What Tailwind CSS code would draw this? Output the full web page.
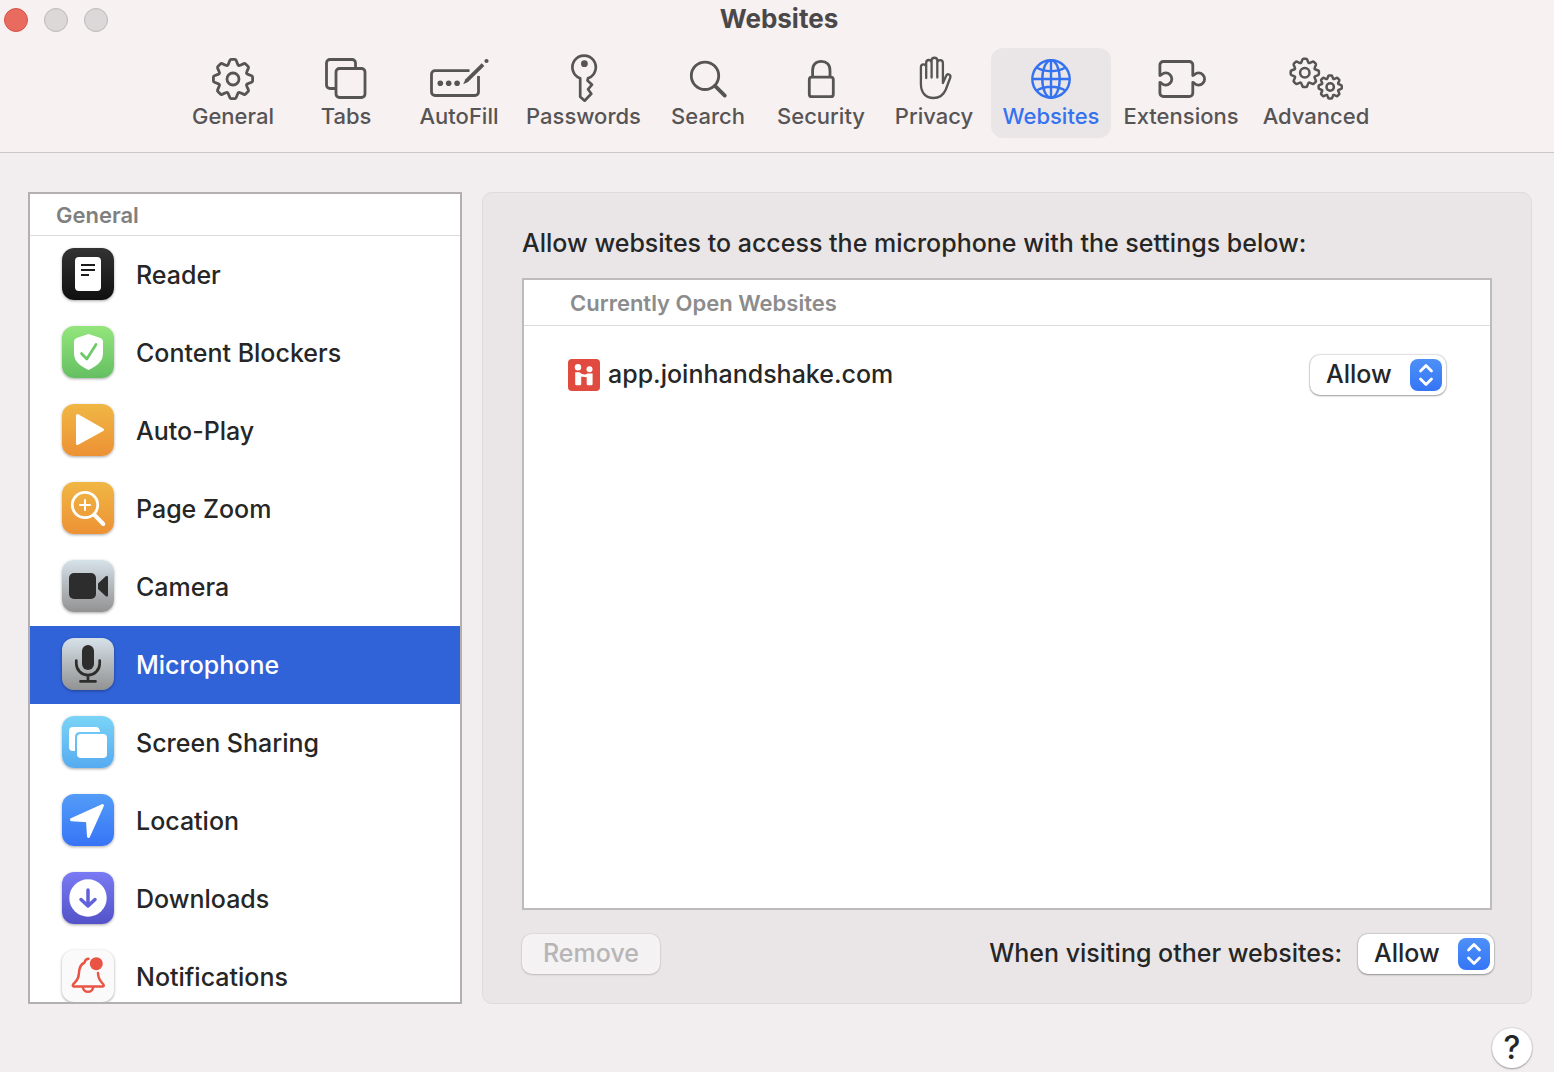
<!DOCTYPE html>
<html lang="en">
<head>
    <meta charset="UTF-8">
    <meta name="viewport" content="width=device-width, initial-scale=1.0">
    <title>Websites</title>
    <script src="https://cdn.jsdelivr.net/npm/@tailwindcss/browser@4"></script>
</head>
<body class="flex h-screen flex-col overflow-hidden bg-[#f2eeef] font-['Inter','Liberation_Sans',sans-serif] text-[25px] font-[450] text-[#262626]">

<!-- Shared gear outline -->
<svg class="hidden">
    <defs>
        <path id="gear" vector-effect="non-scaling-stroke" d="M-4.6-15L-3.2-18.6Q-2.8-19.6-1.8-19.6H1.8Q2.8-19.6 3.2-18.6L4.6-15Q5.28-12.75 7.35-13.86L10.9-15.4Q11.9-15.8 12.6-15.1L15.1-12.6Q15.8-11.9 15.4-10.9L13.86-7.35Q12.75-5.28 15-4.6L18.6-3.2Q19.6-2.8 19.6-1.8V1.8Q19.6 2.8 18.6 3.2L15 4.6Q12.75 5.28 13.86 7.35L15.4 10.9Q15.8 11.9 15.1 12.6L12.6 15.1Q11.9 15.8 10.9 15.4L7.35 13.86Q5.28 12.75 4.6 15L3.2 18.6Q2.8 19.6 1.8 19.6H-1.8Q-2.8 19.6-3.2 18.6L-4.6 15Q-5.28 12.75-7.35 13.86L-10.9 15.4Q-11.9 15.8-12.6 15.1L-15.1 12.6Q-15.8 11.9-15.4 10.9L-13.86 7.35Q-12.75 5.28-15 4.6L-18.6 3.2Q-19.6 2.8-19.6 1.8V-1.8Q-19.6-2.8-18.6-3.2L-15-4.6Q-12.75-5.28-13.86-7.35L-15.4-10.9Q-15.8-11.9-15.1-12.6L-12.6-15.1Q-11.9-15.8-10.9-15.4L-7.35-13.86Q-5.28-12.75-4.6-15Z"/>
    </defs>
</svg>

<!-- Title bar and toolbar -->
<header class="shrink-0 border-b border-[#cbc7c9] bg-[#f7f1f2] pb-[14px] pl-1 text-[#565455]">
    <div class="grid h-10 grid-cols-[1fr_auto_1fr] items-center">
        <div class="flex gap-4">
            <button type="button" aria-label="Close" class="size-6 rounded-full border border-[#d5554b] bg-[#e96b5f]"></button>
            <button type="button" aria-label="Minimize" disabled class="size-6 rounded-full border border-[#bcb8b8] bg-[#dcd8d8]"></button>
            <button type="button" aria-label="Zoom" disabled class="size-6 rounded-full border border-[#bcb8b8] bg-[#dcd8d9]"></button>
        </div>
        <h1 class="pb-0.5 text-[26px] leading-9 font-bold text-[#4a4849]">Websites</h1>
    </div>
    <nav aria-label="Settings" class="mt-2 flex justify-center gap-px text-[22px] leading-6">
        <button type="button" class="flex h-[90px] w-28 flex-col items-center pt-[6px]">
            <svg class="h-[50px] w-[60px]" viewBox="0 0 60 50" fill="none" stroke="currentColor" stroke-width="2.8">
                <use href="#gear" transform="translate(30 25)"/>
                <circle cx="30" cy="25" r="6"/>
            </svg>
            General
        </button>
        <button type="button" class="flex h-[90px] w-28 flex-col items-center pt-[6px]">
            <svg class="h-[50px] w-[60px]" viewBox="0 0 60 50" fill="none" stroke="currentColor" stroke-width="2.8">
                <rect x="20" y="14.5" width="29" height="29" rx="3.5"/>
                <path d="M20 34.5H14a3.5 3.5 0 0 1-3.5-3.5V9A3.5 3.5 0 0 1 14 5.5H36A3.5 3.5 0 0 1 39.5 9v5.5"/>
            </svg>
            Tabs
        </button>
        <button type="button" class="flex h-[90px] w-28 flex-col items-center pt-[6px]">
            <svg class="h-[50px] w-[60px]" viewBox="0 0 60 50" fill="none" stroke="currentColor" stroke-width="2.8">
                <path d="M40.5 16.7H6A3.5 3.5 0 0 0 2.500 20.2V38A3.5 3.5 0 0 0 6 41.5H46A3.5 3.5 0 0 0 49.5 38V22"/>
                <g fill="currentColor" stroke="none">
                    <circle cx="11.3" cy="29.3" r="2.8"/>
                    <circle cx="19.7" cy="29.3" r="2.8"/>
                    <circle cx="28.1" cy="29.3" r="2.8"/>
                    <path d="M34.2 30.2L36.4 25.3L52.7 9.3L55.3 11.9L39 27.9Z"/>
                    <circle cx="57.5" cy="7" r="2.1"/>
                </g>
            </svg>
            AutoFill
        </button>
        <button type="button" class="flex h-[90px] w-[135px] flex-col items-center pt-[6px]">
            <svg class="h-[50px] w-[60px]" viewBox="0 0 60 50" fill="none" stroke="currentColor" stroke-width="2.7" stroke-linejoin="round">
                <path d="M26.2 24.3A11.7 11.7 0 1 1 34 24.3L33.5 26.5L38 30.7L34 35.3L37.3 39.7L30.6 46.7L26.2 42.8Z"/>
                <circle cx="30.4" cy="9.7" r="3.4" fill="currentColor" stroke="none"/>
            </svg>
            Passwords
        </button>
        <button type="button" class="flex h-[90px] w-28 flex-col items-center pt-[6px]">
            <svg class="h-[50px] w-[60px]" viewBox="0 0 60 50" fill="none" stroke="currentColor" stroke-width="2.8">
                <circle cx="27" cy="21.8" r="13.7"/>
                <path d="M37 31.8L46.8 41.6" stroke-width="3.8" stroke-linecap="round"/>
            </svg>
            Search
        </button>
        <button type="button" class="flex h-[90px] w-28 flex-col items-center pt-[6px]">
            <svg class="h-[50px] w-[60px]" viewBox="0 0 60 50" fill="none" stroke="currentColor" stroke-width="2.8">
                <rect x="18.3" y="23.2" width="24" height="19.5" rx="2.5"/>
                <path d="M21.6 23V16.5C21.6 10.5 25 7.3 30.3 7.3S39 10.5 39 16.5V23"/>
            </svg>
            Security
        </button>
        <button type="button" class="flex h-[90px] w-28 flex-col items-center pt-[6px]">
            <svg class="h-[50px] w-[60px]" viewBox="0 0 60 50" fill="none" stroke="currentColor" stroke-width="2.3" stroke-linecap="round" stroke-linejoin="round">
                <path d="M22.2 24V13A2.65 2.65 0 0 0 16.9 13V30C16.9 39 22 44 29.5 44C36 44 39.5 41 41.8 35.5L46.3 23.5C47.2 20.5 43.5 19 42.2 21.8L38.9 29V9A2.8 2.8 0 0 0 33.3 9V23.5M33.3 23V6.6A2.85 2.85 0 0 0 27.6 6.6V23.5M27.6 23V8.7A2.7 2.7 0 0 0 22.2 8.7V14"/>
            </svg>
            Privacy
        </button>
        <button type="button" aria-current="page" class="flex h-[90px] w-[120px] flex-col items-center rounded-xl bg-[#eae5e6] pt-[6px] text-[#3472f0]">
            <svg class="h-[50px] w-[60px]" viewBox="0 0 60 50" fill="none" stroke="currentColor" stroke-width="2.4">
                <circle cx="30" cy="25" r="18.7"/>
                <ellipse cx="30" cy="25" rx="8.7" ry="18.7"/>
                <path d="M30 6V44M11 25H49M15.5 13.5Q22 17.2 30 17.2T44.5 13.5M15.5 36.5Q22 32.8 30 32.8T44.5 36.5"/>
            </svg>
            Websites
        </button>
        <button type="button" class="flex h-[90px] w-[138px] flex-col items-center pt-[6px]">
            <svg class="h-[50px] w-[60px]" viewBox="0 0 60 50" fill="none" stroke="currentColor" stroke-width="2.8" stroke-linejoin="round">
                <path d="M8.9 21.5V11A3.5 3.5 0 0 1 12.4 7.5H38.3A3.5 3.5 0 0 1 41.8 11V21.5C43.5 21.5 44 18.9 47.5 18.9A6 6 0 0 1 47.5 31.1C44 31.1 43.5 28.5 41.8 28.5V39A3.5 3.5 0 0 1 38.3 42.5H12.4A3.5 3.5 0 0 1 8.9 39V28.5C10.6 28.5 11.2 31.1 14.7 31.1A6 6 0 0 0 14.7 18.9C11.2 18.9 10.6 21.5 8.9 21.5Z"/>
            </svg>
            Extensions
        </button>
        <button type="button" class="flex h-[90px] w-[130px] flex-col items-center pt-[6px]">
            <svg class="h-[50px] w-[60px]" viewBox="0 0 60 50" fill="none" stroke="currentColor" stroke-width="2.5">
                <use href="#gear" transform="translate(18.8 18.8) scale(.72)"/>
                <circle cx="18.8" cy="18.8" r="4.7"/>
                <use href="#gear" transform="translate(44.2 33) scale(.59)"/>
                <circle cx="44.2" cy="33" r="3.7"/>
            </svg>
            Advanced
        </button>
    </nav>
</header>

<main class="flex min-h-0 flex-1 gap-5 pt-[39px] pr-[22px] pl-7">
    <!-- Sidebar -->
    <aside class="flex w-[434px] shrink-0 flex-col overflow-hidden border-2 border-[#b4b0b2] bg-white">
        <h2 class="h-[42px] shrink-0 border-b border-[#dcdcdc] pl-[26px] text-[22px] leading-[42px] font-semibold text-[#808080]">General</h2>
        <ul>
            <li>
                <a href="#reader" class="flex h-[78px] items-center gap-[22px] pt-0.5 pl-8">
                    <svg class="mb-1 size-[52px] rounded-xl bg-linear-to-b from-[#333333] to-[#101010] shadow-[0_1px_3px_rgba(0,0,0,0.35)]" viewBox="0 0 52 52">
                        <rect x="13" y="9" width="26" height="34" rx="4" fill="#fff"/>
                        <path d="M19 17H33M19 22H33M19 27H27" stroke="#1c1c1c" stroke-width="2"/>
                    </svg>
                    Reader
                </a>
            </li>
            <li>
                <a href="#content-blockers" class="flex h-[78px] items-center gap-[22px] pt-0.5 pl-8">
                    <svg class="mb-1 size-[52px] rounded-xl bg-linear-to-b from-[#93e67c] to-[#65bf62] shadow-[0_1px_3px_rgba(0,0,0,0.35)]" viewBox="0 0 52 52">
                        <path d="M26.5 8L38.5 12Q41 13 41 15.5V27C41 35 36 39.5 26.5 44C17 39.5 12 35 12 27V15.5Q12 13 14.5 12Z" fill="#fff"/>
                        <path d="M19.5 27.5L24.8 33L34 18.5" fill="none" stroke="#6ccb64" stroke-width="2.7" stroke-linecap="round" stroke-linejoin="round"/>
                    </svg>
                    Content Blockers
                </a>
            </li>
            <li>
                <a href="#auto-play" class="flex h-[78px] items-center gap-[22px] pt-0.5 pl-8">
                    <svg class="mb-1 size-[52px] rounded-xl bg-linear-to-b from-[#f0b744] to-[#ec9135] shadow-[0_1px_3px_rgba(0,0,0,0.35)]" viewBox="0 0 52 52">
                        <path d="M15.5 11.5L40.5 25.7L15.5 39.5Z" fill="#fff" stroke="#fff" stroke-width="3" stroke-linejoin="round"/>
                    </svg>
                    Auto-Play
                </a>
            </li>
            <li>
                <a href="#page-zoom" class="flex h-[78px] items-center gap-[22px] pt-0.5 pl-8">
                    <svg class="mb-1 size-[52px] rounded-xl bg-linear-to-b from-[#f0b744] to-[#ec9135] shadow-[0_1px_3px_rgba(0,0,0,0.35)]" viewBox="0 0 52 52" fill="none" stroke="#fff" stroke-linecap="round">
                        <circle cx="23" cy="23" r="12.7" stroke-width="2.8"/>
                        <path d="M18 23H28M23 18V28" stroke-width="2"/>
                        <path d="M32.5 33L41.3 42" stroke-width="4"/>
                    </svg>
                    Page Zoom
                </a>
            </li>
            <li>
                <a href="#camera" class="flex h-[78px] items-center gap-[22px] pt-0.5 pl-8">
                    <svg class="mb-1 size-[52px] rounded-xl bg-linear-to-b from-[#d6e2e9] to-[#929292] shadow-[0_1px_3px_rgba(0,0,0,0.35)]" viewBox="0 0 52 52" fill="#2d2d2d">
                        <rect x="7" y="13" width="27" height="26" rx="5"/>
                        <path d="M36 23.5L43.5 16.5Q46 14.7 46 17.5V35Q46 37.8 43.5 36L36 29Z"/>
                    </svg>
                    Camera
                </a>
            </li>
            <li>
                <a href="#microphone" aria-current="true" class="flex h-[78px] items-center gap-[22px] bg-[#3062d8] pt-0.5 pl-8 font-medium text-white">
                    <svg class="mb-1 size-[52px] rounded-xl bg-linear-to-b from-[#d6e2e9] to-[#929292] shadow-[0_1px_3px_rgba(0,0,0,0.35)]" viewBox="0 0 52 52" fill="none" stroke="#2d2d2d" stroke-width="2.7" stroke-linecap="round">
                        <rect x="20" y="7" width="12" height="25" rx="6" fill="#2d2d2d" stroke="none"/>
                        <path d="M14.3 22.5V25.5A11.7 11.7 0 0 0 37.7 25.5V22.5M26 37.5V43M18.5 43.4H33.5"/>
                    </svg>
                    Microphone
                </a>
            </li>
            <li>
                <a href="#screen-sharing" class="flex h-[78px] items-center gap-[22px] pt-0.5 pl-8">
                    <svg class="mb-1 size-[52px] rounded-xl bg-linear-to-b from-[#7ad4f6] to-[#56abf0] shadow-[0_1px_3px_rgba(0,0,0,0.35)]" viewBox="0 0 52 52" fill="#fff">
                        <path d="M11 11H34Q37.5 11 38 16H18Q13 16 13 21V35H11Q7 35 7 31V15Q7 11 11 11Z"/>
                        <rect x="15" y="18" width="30" height="24" rx="4"/>
                    </svg>
                    Screen Sharing
                </a>
            </li>
            <li>
                <a href="#location" class="flex h-[78px] items-center gap-[22px] pt-0.5 pl-8">
                    <svg class="mb-1 size-[52px] rounded-xl bg-linear-to-b from-[#539cf8] to-[#3874f6] shadow-[0_1px_3px_rgba(0,0,0,0.35)]" viewBox="0 0 52 52">
                        <path d="M40.5 11.5L9.5 25.7L25.5 26.7L26.5 42.5Z" fill="#fff" stroke="#fff" stroke-width="3" stroke-linejoin="round"/>
                    </svg>
                    Location
                </a>
            </li>
            <li>
                <a href="#downloads" class="flex h-[78px] items-center gap-[22px] pt-0.5 pl-8">
                    <svg class="mb-1 size-[52px] rounded-xl bg-linear-to-b from-[#7a7bf4] to-[#5352c8] shadow-[0_1px_3px_rgba(0,0,0,0.35)]" viewBox="0 0 52 52">
                        <circle cx="26" cy="26" r="18.7" fill="#fff"/>
                        <path d="M26 18V33.5M19 27.5L26 34L33 27.5" fill="none" stroke="#6261dc" stroke-width="3.5" stroke-linecap="round" stroke-linejoin="round"/>
                    </svg>
                    Downloads
                </a>
            </li>
            <li>
                <a href="#notifications" class="flex h-[78px] items-center gap-[22px] pt-0.5 pl-8">
                    <svg class="mb-1 size-[52px] rounded-xl bg-[#fafafa] shadow-[0_1px_3px_rgba(0,0,0,0.35)]" viewBox="0 0 52 52" fill="none" stroke="#e95445" stroke-width="2.5" stroke-linecap="round" stroke-linejoin="round">
                        <path d="M26.5 8.8C24 8.8 23 10.3 22.5 12.5C18 14.5 17 18.5 16.8 24C16.6 30 14 31 11.2 34.3Q10 36.3 12 36.5H40.5Q42.5 36.3 41.3 34.3C38.5 31 36.3 30 36 23"/>
                        <path d="M21 38A5.2 5.2 0 0 0 31 38"/>
                        <circle cx="34.3" cy="13.7" r="6.5" fill="#e95445" stroke="none"/>
                    </svg>
                    Notifications
                </a>
            </li>
        </ul>
    </aside>

    <!-- Microphone permissions -->
    <section class="flex min-w-0 flex-1 flex-col rounded-[10px] border border-[#dfdbdc] bg-[#eae6e7] px-[39px] pt-[34px] pb-[29px]">
        <p class="mb-[19px] leading-8">Allow websites to access the microphone with the settings below:</p>
        <div class="min-h-0 flex-1 border-2 border-[#bdbbbc] bg-white">
            <table class="w-full">
                <thead>
                    <tr class="h-[45px] border-b border-[#dcdcdc]">
                        <th colspan="2" class="pt-0.5 pl-[46px] text-left text-[22px] leading-8 font-semibold text-[#8c8c8c]">Currently Open Websites</th>
                    </tr>
                </thead>
                <tbody>
                    <tr>
                        <td class="pt-[29px] pl-11">
                            <label for="site-permission" class="flex items-center gap-2">
                                <svg class="size-8 rounded bg-[#e04a3f]" viewBox="0 0 32 32" fill="#fff">
                                    <circle cx="10" cy="8.3" r="3.2"/>
                                    <circle cx="21.5" cy="10.2" r="3"/>
                                    <path d="M7.2 13.3H11.5Q14 16 17.5 15.5L19.5 14.5H24.6V25Q24.6 26.3 23.3 26.3H20Q18.7 26.3 18.7 25V18.3Q16 17.3 13.2 17.8V25Q13.2 26.3 11.9 26.3H8.5Q7.2 26.3 7.2 25Z"/>
                                </svg>
                                app.joinhandshake.com
                            </label>
                        </td>
                        <td class="w-[180px] pt-[29px] pr-11">
                            <div class="relative h-10 w-34">
                                <select id="site-permission" class="h-10 w-full appearance-none rounded-[10px] bg-white pl-4 shadow-[0_0_1px_1px_rgba(0,0,0,0.12),0_1px_2px_rgba(0,0,0,0.3)]">
                                    <option>Allow</option>
                                    <option>Ask</option>
                                    <option>Deny</option>
                                </select>
                                <svg class="pointer-events-none absolute top-1 right-1 size-8 rounded-lg bg-linear-to-b from-[#4d90f8] to-[#3575f6]" viewBox="0 0 32 32" fill="none" stroke="#fff" stroke-width="2.8" stroke-linecap="round" stroke-linejoin="round">
                                    <path d="M10.5 12L16 6.500L21.5 12M10.5 20L16 25.5L21.5 20"/>
                                </svg>
                            </div>
                        </td>
                    </tr>
                </tbody>
            </table>
        </div>
        <div class="mt-6 flex h-10 items-center">
            <button type="button" disabled class="h-10 w-[138px] rounded-[10px] bg-[#f4f2f3] text-[#b7b5b6] shadow-[0_0_1px_1px_rgba(0,0,0,0.05),0_1px_2px_rgba(0,0,0,0.15)]">Remove</button>
            <label for="default-permission" class="mr-4 ml-auto">When visiting other websites:</label>
            <div class="relative -mr-0.5 h-10 w-34">
                <select id="default-permission" class="h-10 w-full appearance-none rounded-[10px] bg-white pl-4 shadow-[0_0_1px_1px_rgba(0,0,0,0.1),0_1px_2px_rgba(0,0,0,0.3)]">
                    <option>Allow</option>
                    <option>Ask</option>
                    <option>Deny</option>
                </select>
                <svg class="pointer-events-none absolute top-1 right-1 size-8 rounded-lg bg-linear-to-b from-[#4d90f8] to-[#3575f6]" viewBox="0 0 32 32" fill="none" stroke="#fff" stroke-width="2.8" stroke-linecap="round" stroke-linejoin="round">
                    <path d="M10.5 12L16 6.5L21.5 12M10.5 20L16 25.5L21.5 20"/>
                </svg>
            </div>
        </div>
    </section>
</main>

<footer class="flex shrink-0 justify-end pt-6 pr-[22px] pb-1">
    <button type="button" aria-label="Help" class="size-10 rounded-full bg-white text-[32px] leading-10 font-medium shadow-[0_0_1px_1px_rgba(0,0,0,0.08),0_1px_2px_rgba(0,0,0,0.3)]">?</button>
</footer>
</body>
</html>
